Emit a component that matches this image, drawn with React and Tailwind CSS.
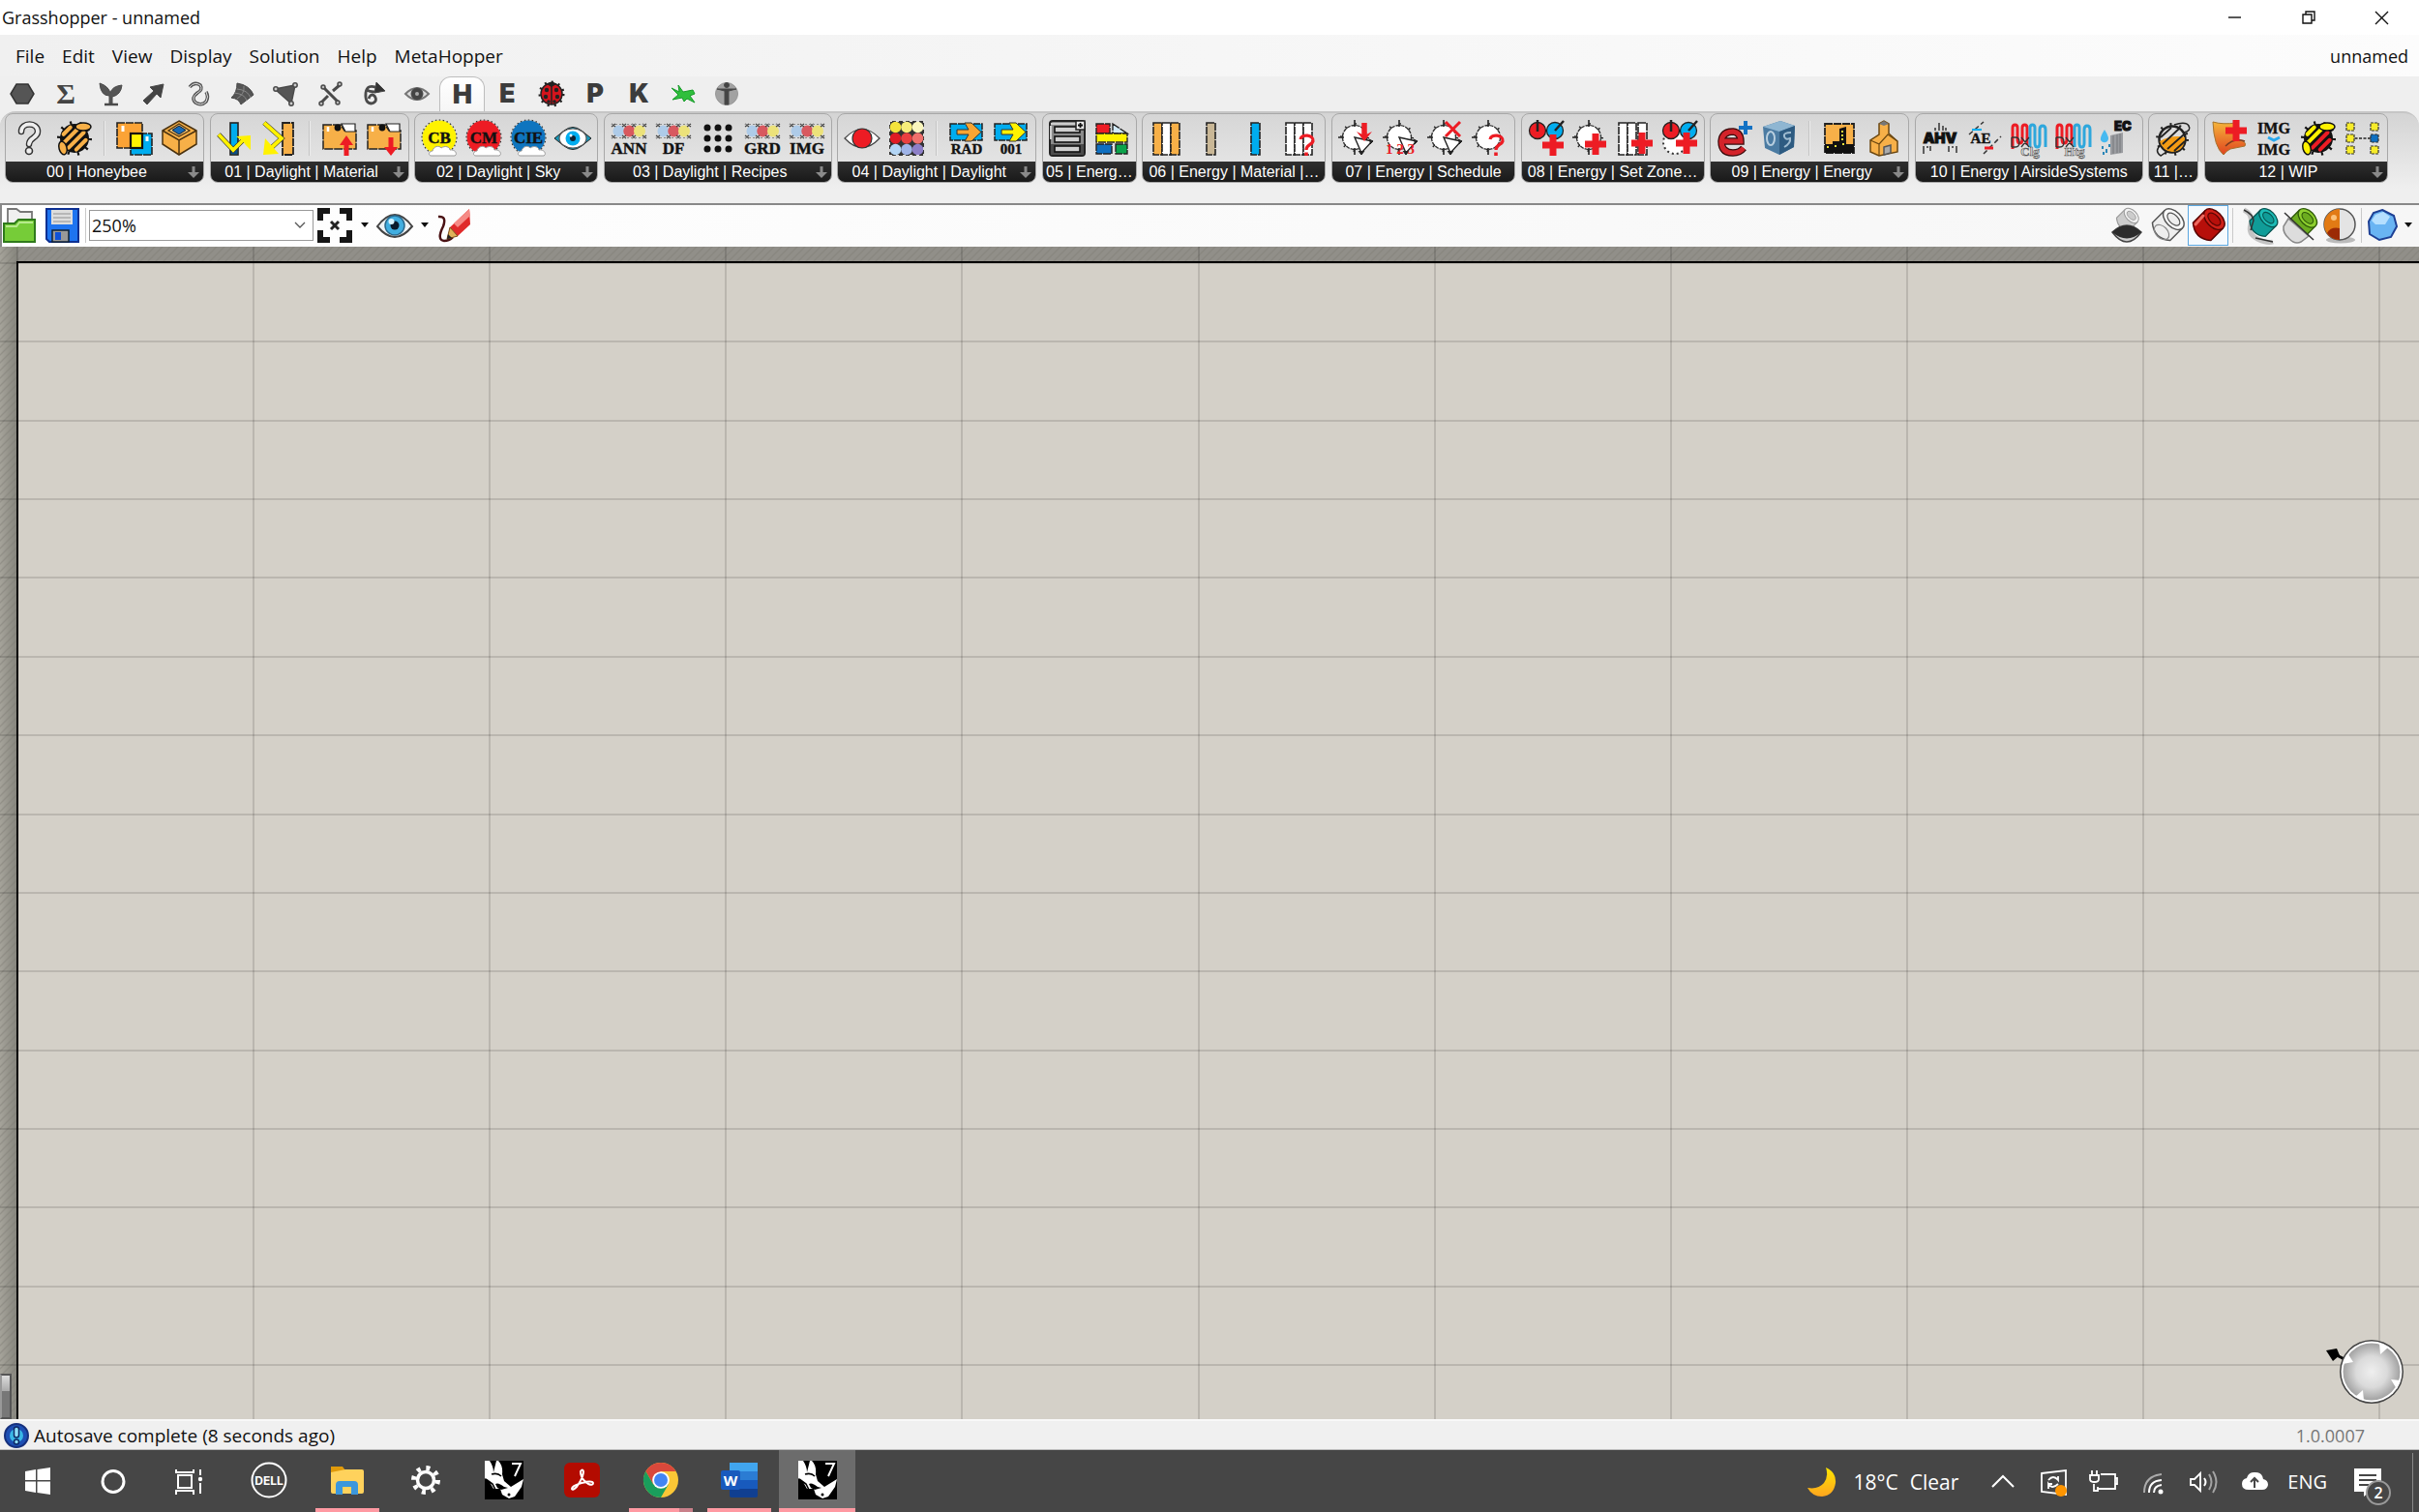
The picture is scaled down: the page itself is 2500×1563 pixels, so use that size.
import React, { useState } from "react";

const ORANGE = "#f7b048";
const RED = "#ed1c24";
const CYAN = "#00adef";
const YELLOW = "#fff200";

const Icon = ({ children }) => (
  <svg viewBox="0 0 38 38" className="size-[38px] shrink-0 overflow-visible" aria-hidden="true">
    {children}
  </svg>
);

/* ---------- shared drawing parts ---------- */

const SlabText = ({ x = 19, y, size = 17, children }) => (
  <text
    x={x}
    y={y}
    fontSize={size}
    fontWeight="700"
    textAnchor="middle"
    fontFamily="'Liberation Serif', serif"
    fill="#111"
    stroke="#111"
    strokeWidth=".4"
  >
    {children}
  </text>
);

const Plus = ({ x, y, r = 11, w = 7, color = RED }) => (
  <path d={`M${x - r} ${y}H${x + r}M${x} ${y - r}V${y + r}`} stroke={color} strokeWidth={w} />
);

const Bee = ({ body, wing, stripes }) => (
  <Icon>
    <circle cx="19" cy="19" r="15.5" fill="none" stroke="#111" strokeWidth="5" strokeDasharray="2 7.7" />
    <circle cx="19" cy="19" r="15" fill="#111" />
    <g transform="rotate(-45 19 19)" strokeWidth="4" strokeLinecap="round">
      <path d="M14 8H24" stroke={stripes[0]} />
      <path d="M9 14.500H29" stroke={stripes[0]} />
      <path d="M8 21.500H30" stroke={body} />
      <path d="M12 28.500H26" stroke={stripes[1]} />
    </g>
    <ellipse cx="28" cy="7" rx="8" ry="4" fill={wing} stroke="#111" strokeWidth="1.5" />
    <ellipse cx="7" cy="29" rx="4" ry="7" transform="rotate(-15 7 29)" fill={wing} stroke="#111" strokeWidth="1.5" />
  </Icon>
);

const Folder = ({ up }) => (
  <Icon>
    <path d="M2 5H20L24 11H36V30H2Z" fill={ORANGE} stroke="#222" strokeWidth="1.5" strokeDasharray="9 1" />
    <path d="M21 4H35V12H25Z" fill="#fff" stroke="#222" strokeWidth="1.2" />
    <circle cx="17" cy="8" r="3.4" fill="#111" />
    <path d="M7 7V12" stroke="#fff" strokeWidth="2.5" />
    {up ? (
      <path d="M26 16L33 26H28.5V37H23.5V26H19Z" fill={RED} />
    ) : (
      <path d="M26 37L33 28H28.5V18H23.5V28H19Z" fill={RED} />
    )}
  </Icon>
);

const Sky = ({ color, label }) => (
  <Icon>
    <circle cx="19" cy="18" r="17.5" fill={color} />
    <circle cx="19" cy="18" r="18" fill="none" stroke="#333" strokeWidth="1.2" strokeDasharray="1.5 2.5" />
    <SlabText y="24">{label}</SlabText>
    <path
      d="M11 37C7 37 8 32 12 32C13 27 19 26 21 29C25 26 30 28 30 31C36 30 38 36 35 37Z"
      fill="#fff"
      stroke="#999"
      strokeWidth="1"
    />
  </Icon>
);

const Film = () => (
  <g>
    <circle cx="8.5" cy="11.5" r="6" fill="#aecbe8" />
    <circle cx="19.3" cy="11.5" r="6" fill="#d8595f" />
    <circle cx="30" cy="11.5" r="6" fill="#ece27a" />
    <path
      d="M1 4l4 3M5 4l-4 3M12 4l4 3M16 4l-4 3M22 4l4 3M26 4l-4 3M33 4l4 3M37 4l-4 3M1 16l4 3M5 16l-4 3M12 16l4 3M16 16l-4 3M22 16l4 3M26 16l-4 3M33 16l4 3M37 16l-4 3"
      stroke="#444"
      strokeWidth="1.2"
    />
    <path d="M1 4.5H37M1 18.5H37" stroke="#888" strokeWidth="1" strokeDasharray="2 2" />
  </g>
);

const FilmLabel = ({ label }) => (
  <Icon>
    <Film />
    <SlabText y="35">{label}</SlabText>
  </Icon>
);

const ArrowLabel = ({ color, label }) => (
  <Icon>
    <rect x="2" y="4" width="33" height="17" fill={CYAN} stroke="#222" strokeWidth="1.5" strokeDasharray="7 1" />
    <path d="M9 10H21L17 3H24L34 12.5L24 22H17L21 15H9Z" fill={color} stroke="#333" strokeWidth="1" />
    <SlabText y="35" size={15}>{label}</SlabText>
  </Icon>
);

const Clock = ({ wedge = true }) => (
  <g>
    <circle cx="17" cy="18" r="12.5" fill="#fff" stroke="#333" strokeWidth="1.4" strokeDasharray="4 1" />
    <circle cx="17" cy="18" r="13.5" fill="none" stroke="#222" strokeWidth="3" strokeDasharray="1.3 9.3" />
    <path d="M17 0V7M0 18H6M17 29V36" stroke="#222" strokeWidth="1.6" />
    {wedge && <path d="M17 18L35 22L24 34Z" fill="#fff" stroke="#222" strokeWidth="1.4" />}
    {wedge && <path d="M32 20l4 2l-3 3M21 32l3 4l3-4" fill="#222" stroke="#222" />}
  </g>
);

const RedQuestion = () => (
  <g fill="none" stroke={RED} strokeWidth="3.2">
    <path d="M19 20C20 14 33 15 32 22C31 26 25 25 25 31" />
    <path d="M25 33.5V37" strokeWidth="3.6" />
  </g>
);

const Dials = () => (
  <g stroke="#222" strokeWidth="1.3">
    <circle cx="10" cy="11" r="8.5" fill={RED} />
    <circle cx="28" cy="11" r="8.5" fill={CYAN} />
    <path d="M10 0V12M28 11L37 1" strokeWidth="2.5" />
  </g>
);

const Coil = ({ label }) => (
  <Icon>
    <g fill="none" strokeWidth="3">
      <path d="M2 30V8Q2 5 4.5 5T7 8V20Q7 24 9.5 24T12 20V8Q12 5 14.5 5T17 8V26" stroke={RED} />
      <path d="M20 28V8Q20 5 22.5 5T25 8V24Q25 28 27.5 28T30 24V10Q30 6 33 6T36 10V28" stroke="#2ea7dc" />
    </g>
    <path d="M1 18V28M1 18H5Q9 18 9 23T5 28H1M11 18L19 28M19 18L11 28" fill="none" stroke="#333" strokeWidth="1.3" />
    <text x="20" y="37" fontSize="13" fontWeight="700" textAnchor="middle" fontFamily="'Liberation Serif', serif" fill="#ddd" stroke="#555" strokeWidth=".6">{label}</text>
  </Icon>
);

const Slab = ({ x, w, color }) => (
  <rect x={x} y="3" width={w} height="33" fill={color} stroke="#222" strokeWidth="1.6" strokeDasharray="8 1" />
);

/* ---------- ribbon groups ---------- */

const GROUPS = [
  {
    label: "00 | Honeybee",
    more: true,
    icons: [
      ["Help", <Icon>
        <g fill="none" strokeLinecap="round">
          <path d="M10 12C10 2 27 2 27 12C27 19 18 18 18 25" stroke="#333" strokeWidth="6.5" />
          <path d="M10 12C10 2 27 2 27 12C27 19 18 18 18 25" stroke="#eee" strokeWidth="3.8" />
        </g>
        <circle cx="18" cy="32" r="3.5" fill="#eee" stroke="#333" strokeWidth="1.6" />
      </Icon>],
      ["Honeybee", <Bee body={ORANGE} wing={ORANGE} stripes={[ORANGE, ORANGE]} />],
      null,
      ["Solve adjacencies", <Icon>
        <rect x="1" y="3" width="26" height="26" fill="#fba336" stroke="#222" strokeWidth="1.6" strokeDasharray="8 1" />
        <rect x="15" y="14" width="22" height="22" fill={CYAN} stroke="#222" strokeWidth="1.6" strokeDasharray="8 1" />
        <rect x="15" y="14" width="12" height="15" fill={YELLOW} stroke="#111" strokeWidth="2.2" />
        <path d="M7 6V12M32 17V22" stroke="#fff" strokeWidth="3" />
      </Icon>],
      ["Create zone", <Icon>
        <path d="M19 1L37 11V25L19 36L2 25V11Z" fill={ORANGE} stroke="#4a3210" strokeWidth="1.5" />
        <path d="M2 11L19 21L37 11M19 21V36" stroke="#4a3210" strokeWidth="1.5" fill="none" />
        <path d="M19 4L30 11L19 17L8 11Z" fill="#f9c574" stroke="#4a3210" strokeWidth="1.2" />
        <path d="M19 6L26 10.5L19 15L12 10.5Z" fill="#1568b4" stroke="#123" strokeWidth="1" />
      </Icon>],
    ],
  },
  {
    label: "01 | Daylight | Material",
    more: true,
    icons: [
      ["Glass material", <Icon>
        <rect x="14" y="3" width="8" height="33" fill={CYAN} stroke="#222" strokeWidth="1.6" />
        <rect x="15" y="29" width="6" height="6" fill="#0b4f8a" />
        <path d="M2 15L17 31L29 19" stroke="#333" strokeWidth="5" fill="none" />
        <path d="M2 15L17 31L28 20" stroke={YELLOW} strokeWidth="3.8" fill="none" />
        <path d="M20 17L35 16L35 31L30 26L27 22Z" fill={YELLOW} />
      </Icon>],
      ["Opaque material", <Icon>
        <rect x="22" y="3" width="11" height="33" fill={ORANGE} stroke="#222" strokeWidth="1.8" strokeDasharray="8 1" />
        <path d="M3 3L21 19L9 30" stroke="#333" strokeWidth="5" fill="none" />
        <path d="M3 3L21 19L9 30" stroke={YELLOW} strokeWidth="3.8" fill="none" />
        <path d="M4 19L18 35L2 36Z" fill={YELLOW} />
      </Icon>],
      null,
      ["Add to library", <Folder up />],
      ["Get from library", <Folder />],
    ],
  },
  {
    label: "02 | Daylight | Sky",
    more: true,
    icons: [
      ["Climate based sky", <Sky color={YELLOW} label="CB" />],
      ["Cumulative sky", <Sky color={RED} label="CM" />],
      ["CIE sky", <Sky color="#0f75bf" label="CIE" />],
      ["View sky", <Icon>
        <path d="M0 19L10 11Q19 4 28 11L38 19L28 27Q19 34 10 27Z" fill="#1597b8" stroke="#222" strokeWidth="1" />
        <ellipse cx="19" cy="19" rx="14" ry="10" fill="#fff" stroke="#555" strokeWidth="1.2" />
        <circle cx="19" cy="19" r="7.5" fill={CYAN} />
        <circle cx="19" cy="19" r="3" fill="#123" />
        <circle cx="17" cy="16" r="1.5" fill="#fff" />
      </Icon>],
    ],
  },
  {
    label: "03 | Daylight | Recipes",
    more: true,
    icons: [
      ["Annual recipe", <FilmLabel label="ANN" />],
      ["Daylight factor recipe", <FilmLabel label="DF" />],
      ["Test points", <Icon>
        <g fill="#111">
          {[8, 19, 30].map((y) => [8, 19, 30].map((x) => <circle key={`${x}-${y}`} cx={x} cy={y} r="3.5" />))}
        </g>
      </Icon>],
      ["Grid recipe", <FilmLabel label="GRD" />],
      ["Image recipe", <FilmLabel label="IMG" />],
    ],
  },
  {
    label: "04 | Daylight | Daylight",
    more: true,
    icons: [
      ["Run daylight", <Icon>
        <path d="M1 19Q19 0 37 19Q19 38 1 19Z" fill="#fff" stroke="#444" strokeWidth="1.2" />
        <circle cx="19" cy="19" r="10" fill={RED} stroke="#333" strokeWidth="1.2" />
      </Icon>],
      ["Read results", <Icon>
        <rect x="1" y="1" width="36" height="36" fill="#333" />
        {["#f3e33c", "#f7ed7a", "#faf6bd", "#e01b24", "#ea4040", "#f0706c", "#b3d5f5", "#9fb4e8", "#8d7fc7"].map((c, i) => (
          <circle key={c} cx={7.5 + (i % 3) * 11.5} cy={7.5 + Math.floor(i / 3) * 11.5} r="5.8" fill={c} />
        ))}
        <rect x="1" y="1" width="36" height="36" fill="none" stroke="#ddd" strokeWidth="2" strokeDasharray="3 4" />
      </Icon>],
      null,
      ["Export RAD", <ArrowLabel color="#f9a533" label="RAD" />],
      ["Export points", <ArrowLabel color={YELLOW} label="001" />],
    ],
  },
  {
    label: "05 | Energ…",
    icons: [
      ["Lookup program", <Icon>
        <rect x="1" y="1" width="36" height="36" rx="3" fill="#8a8a8a" stroke="#222" strokeWidth="2" />
        <rect x="2" y="25" width="34" height="11" fill="#4c4c4c" />
        <path d="M2 4H28M2 6V20" stroke="#ccc" strokeWidth="2" />
        {[7, 17, 27].map((y) => (
          <rect key={y} x="6" y={y} width="26" height="6" fill="#d0d0d0" stroke="#111" strokeWidth="1.6" />
        ))}
        <rect x="28" y="1" width="9" height="9" fill="#eee" stroke="#222" strokeWidth="1.5" />
        <path d="M30 5.5H35M32.5 3V8" stroke="#111" strokeWidth="1.8" />
      </Icon>],
      ["Split building mass", <Icon>
        <g stroke="#222" strokeWidth="1.4" strokeDasharray="8 1">
          <path d="M20 4L35 14H20Z" fill="#cfe9f7" />
          <rect x="3" y="4" width="14" height="10" fill={RED} />
          <rect x="3" y="14" width="32" height="9" fill={YELLOW} />
          <rect x="3" y="25" width="16" height="10" fill="#0f6fc0" />
          <rect x="23" y="25" width="12" height="10" fill="#0ca34b" />
        </g>
      </Icon>],
    ],
  },
  {
    label: "06 | Energy | Material |…",
    icons: [
      ["Wall construction", <Icon><Slab x={5} w={9} color={ORANGE} /><Slab x={14} w={9} color="#fff" /><Slab x={23} w={9} color={ORANGE} /></Icon>],
      ["Opaque layer", <Icon><Slab x={14} w={9} color="#c9b796" /></Icon>],
      ["Glass layer", <Icon><Slab x={14} w={9} color={CYAN} /></Icon>],
      ["Search construction", <Icon><Slab x={4} w={9} color="#fff" /><Slab x={13} w={9} color="#fff" /><Slab x={22} w={9} color="#fff" /><RedQuestion /></Icon>],
    ],
  },
  {
    label: "07 | Energy | Schedule",
    icons: [
      ["Import schedule", <Icon><Clock /><path d="M27 3V16" stroke={RED} strokeWidth="5.5" /><path d="M19 12L27 22L35 12L27 16Z" fill={RED} /></Icon>],
      ["Schedule values", <Icon>
        <Clock />
        <text x="18" y="35" fontSize="15" fontWeight="700" textAnchor="middle" fontFamily="'Liberation Serif', serif" fill={RED}>1 2 3</text>
      </Icon>],
      ["Remove schedule", <Icon><Clock /><path d="M19 2L34 17M34 2L19 17" stroke={RED} strokeWidth="3" /></Icon>],
      ["Search schedule", <Icon><Clock wedge={false} /><RedQuestion /></Icon>],
    ],
  },
  {
    label: "08 | Energy | Set Zone…",
    icons: [
      ["Set thresholds", <Icon><Dials /><Plus x={26} y={26} /></Icon>],
      ["Set schedules", <Icon><Clock wedge={false} /><Plus x={24} y={25} /></Icon>],
      ["Set constructions", <Icon><Slab x={2} w={9} color="#fff" /><Slab x={11} w={9} color="#fff" /><Slab x={22} w={9} color="#fff" /><Plus x={26} y={24} /></Icon>],
      ["Set loads", <Icon><circle cx="14" cy="23" r="12" fill="#fff" stroke="#333" strokeWidth="2" strokeDasharray="2 3" /><Dials /><Plus x={26} y={24} /></Icon>],
    ],
  },
  {
    label: "09 | Energy | Energy",
    more: true,
    icons: [
      ["Run EnergyPlus", <Icon>
        <path d="M5 22H25Q25 13 17 12Q6 12 5 22Q5 34 17 34Q24 34 28 29" fill="none" stroke="#3a0b0c" strokeWidth="7.5" />
        <path d="M5 22H25Q25 13 17 12Q6 12 5 22Q5 34 17 34Q24 34 28 29" fill="none" stroke="#d3232a" strokeWidth="5" />
        <Plus x={30} y={8} r={7} w={4} color="#1272c4" />
      </Icon>],
      ["Export to OpenStudio", <Icon>
        <path d="M2 7L20 1L35 6L34 28L19 36L4 29Z" fill="#4b7ba2" />
        <path d="M2 7L20 1L35 6L19 12Z" fill="#8fb6d2" />
        <path d="M19 12L35 6L34 28L19 36Z" fill="#2e5b81" />
        <ellipse cx="10" cy="19" rx="4" ry="7" fill="none" stroke="#b9cfdf" strokeWidth="2" />
        <path d="M31 13Q23 13 24 17T30 19Q31 24 24 28" fill="none" stroke="#9fbbd0" strokeWidth="2" />
      </Icon>],
      null,
      ["Surface parameters", <Icon>
        <rect x="4" y="4" width="30" height="30" fill={ORANGE} stroke="#222" strokeWidth="1.8" strokeDasharray="8 1" />
        <path d="M4 25H12V22H19V9L26 7V25H34V34H4Z" fill="#111" />
        <path d="M22 11V22M7 27V31M15 26V28M22 25L24 25" stroke="#e6e03a" strokeWidth="2" strokeDasharray="2 2" />
      </Icon>],
      ["Generator system", <Icon>
        <path d="M14 4L19 1L24 4V14L33 22V33L14 37L5 33V21L14 15Z" fill={ORANGE} stroke="#6b4710" strokeWidth="1.5" />
        <path d="M5 21L14 25V37M14 25L23 15L33 22" fill="none" stroke="#6b4710" strokeWidth="1.2" />
        <path d="M19 28L26 26V34L19 36Z" fill="#aaa" stroke="#555" strokeWidth="1.5" />
        <path d="M14 4L19 6L24 4L19 1Z" fill="#777" />
      </Icon>],
    ],
  },
  {
    label: "10 | Energy | AirsideSystems",
    icons: [
      ["Air handling unit", <Icon>
        <text x="19" y="24" fontSize="15" fontWeight="900" textAnchor="middle" fontFamily="Inter, sans-serif" fill="#111" stroke="#111">AHV</text>
        <path d="M14 8V11M18 3V11M22 6V11M25 8V11M2 27V35M6 27V29M9 27V32M28 27V33M32 27V29M36 27V34" stroke="#333" strokeWidth="1.5" />
      </Icon>],
      ["Airside economizer", <Icon>
        <SlabText x={15} y="24" size={15}>AE</SlabText>
        <path d="M3 15L18 2M18 35L36 17" stroke="#333" strokeWidth="1.5" strokeDasharray="5 3" />
        <path d="M6 10H16" stroke={CYAN} strokeWidth="2" />
        <path d="M19 29H28" stroke={RED} strokeWidth="3" />
      </Icon>],
      ["DX cooling coil", <Coil label="Clg" />],
      ["DX heating coil", <Coil label="Htg" />],
      ["Evaporative cooler", <Icon>
        <text x="15" y="11" fontSize="13" fontWeight="900" fontFamily="Inter, sans-serif" fill="#111" stroke="#111">EC</text>
        <path d="M5 10Q11 19 8 22Q4 25 1 21Q0 18 5 10Z" fill="#47b9f0" />
        <path d="M3 27v3M7 30v4M10 25v3M4 33v3" stroke="#2a86b8" strokeWidth="2" />
        <path d="M11 16L24 13V34L11 36Z" fill="#9a9ca0" />
        <path d="M14 16V35M18 15V34M21 14V34" stroke="#77797d" strokeWidth="1" />
      </Icon>],
    ],
  },
  {
    label: "11 |…",
    icons: [
      ["Honey jar", <Icon>
        <circle cx="18" cy="20" r="15.5" fill="none" stroke="#222" strokeWidth="3" strokeDasharray="2 8" />
        <circle cx="18" cy="20" r="13.5" fill="#ddd" stroke="#222" strokeWidth="2.5" />
        <path d="M5 22Q18 15 31 18Q31 32 18 33Q8 32 5 22Z" fill="#f49c14" />
        <path d="M8 25L25 9M13 30L30 15M20 32L31 22M6 18L17 8" stroke="#222" strokeWidth="1.8" />
        <path d="M20 5Q32 1 35 6T30 13M6 26Q-1 32 6 37L12 33" fill="none" stroke="#222" strokeWidth="1.5" />
      </Icon>],
    ],
  },
  {
    label: "12 | WIP",
    more: true,
    icons: [
      ["WIP add", <Icon>
        <defs>
          <linearGradient id="scroll" x1="0" y1="0" x2="0" y2="1">
            <stop offset="0" stopColor="#f5b63a" />
            <stop offset="1" stopColor="#e0431f" />
          </linearGradient>
        </defs>
        <path d="M2 2Q12 5 26 3V20Q38 22 35 27L20 30Q16 32 13 36Q3 28 2 2Z" fill="url(#scroll)" stroke="#a5742e" strokeWidth="1" />
        <path d="M15 27Q24 18 35 22" stroke="#7c3a20" strokeWidth="1.5" fill="none" />
        <Plus x={26} y={11} />
      </Icon>],
      ["Image compare", <Icon>
        <SlabText y="14" size={16}>IMG</SlabText>
        <path d="M13 18L19 21L25 18" stroke="#29a9ee" strokeWidth="3" fill="none" />
        <SlabText y="36" size={16}>IMG</SlabText>
      </Icon>],
      ["WIP bee", <Bee body={RED} wing={YELLOW} stripes={[YELLOW, RED]} />],
      ["Connect systems", <Icon>
        <path d="M6 19H32" stroke="#222" strokeWidth="1.5" strokeDasharray="3 1.5" />
        {[7, 19, 31].map((y) => (
          <g key={y} stroke="#333" strokeWidth="1.2" strokeDasharray="3 1">
            <rect x="2" y={y - 4} width="8" height="8" fill="#f7ec2a" />
            <rect x="27" y={y - 4} width="8" height="8" fill={y === 19 ? "#0f6fc0" : "#f7ec2a"} />
          </g>
        ))}
      </Icon>],
    ],
  },
];

/* ---------- component tabs ---------- */

const TabIcon = ({ children }) => (
  <svg viewBox="0 0 32 32" className="size-8" fill="#555" stroke="#4a4a4a" strokeWidth="1" aria-hidden="true">
    {children}
  </svg>
);

const Letter = ({ children }) => <span className="font-['Inter',sans-serif] text-[27px] leading-8 font-black text-[#3c3c3c]">{children}</span>;

const TABS = [
  ["Params", <TabIcon><path d="M10 6H22L28 16L22 26H10L4 16Z" stroke="#333" strokeWidth="1.5" /></TabIcon>],
  ["Maths", <span className="font-['Liberation_Serif',serif] text-3xl leading-8 font-bold text-[#444]">Σ</span>],
  ["Sets", <TabIcon>
    <path d="M15 26V18Q6 18 5 5Q14 8 16 15Q18 8 28 7Q27 17 18 19V26Z" />
    <path d="M10 27H24" strokeWidth="2.5" />
  </TabIcon>],
  ["Vector", <TabIcon><path d="M26 6L23 20L19 16L9 27L5 23L16 13L12 9Z" fill="#444" /></TabIcon>],
  ["Curve", <TabIcon>
    <path d="M8 9Q13 3 19 7Q22 12 16 15Q9 20 14 25Q20 29 25 24Q28 19 25 14" fill="none" strokeWidth="3.5" stroke="#555" />
    <path d="M8 9Q13 3 19 7Q22 12 16 15Q9 20 14 25Q20 29 25 24Q28 19 25 14" fill="none" strokeWidth="1" stroke="#ddd" />
  </TabIcon>],
  ["Surface", <TabIcon>
    <path d="M11 5Q24 7 28 17L15 27Q13 21 5 20Q11 15 11 5Z" />
    <path d="M8 15Q19 16 21 23M18 8Q19 16 11 21M11 11Q22 12 25 20" fill="none" stroke="#888" />
  </TabIcon>],
  ["Mesh", <TabIcon>
    <path d="M5 11L26 7L22 26Z" strokeWidth="1.5" />
    <g fill="#ccc" strokeWidth="1.5"><circle cx="6" cy="11" r="2.2" /><circle cx="26" cy="7" r="2.2" /><circle cx="22" cy="26" r="2.2" /></g>
  </TabIcon>],
  ["Intersect", <TabIcon>
    <path d="M7 25L14 18M19 13L26 7M9 9L24 24" strokeWidth="3" />
    <g fill="#bbb" strokeWidth="1.5"><circle cx="7" cy="26" r="2" /><circle cx="26" cy="6" r="2" /><circle cx="9" cy="9" r="2" /><circle cx="24" cy="25" r="2" /></g>
  </TabIcon>],
  ["Transform", <TabIcon>
    <path d="M21 10Q9 5 8 15Q7 26 14 26Q21 24 17 18Q13 15 11 21M9 12Q14 15 22 13" fill="none" strokeWidth="2.8" />
    <path d="M19 4L28 13L17 15Z" fill="#333" />
  </TabIcon>],
  ["Display", <TabIcon>
    <path d="M4 16Q16 4 28 16Q16 28 4 16Z" fill="#ddd" strokeWidth="2" stroke="#777" />
    <circle cx="16" cy="16" r="6" fill="#444" /><circle cx="16" cy="16" r="2" fill="#aaa" stroke="none" />
  </TabIcon>],
  ["Honeybee", <Letter>H</Letter>],
  ["Extra", <Letter>E</Letter>],
  ["Ladybug", <TabIcon>
    <circle cx="16" cy="16" r="12" fill="none" stroke="#222" strokeWidth="3" strokeDasharray="2 5" />
    <circle cx="16" cy="16" r="11" fill="#d4141c" stroke="#222" strokeWidth="1.5" />
    <path d="M16 6V27" stroke="#222" strokeWidth="1.5" />
    <g fill="#222" stroke="none"><circle cx="11" cy="12" r="2.2" /><circle cx="21" cy="12" r="2.2" /><circle cx="10" cy="19" r="2.2" /><circle cx="22" cy="19" r="2.2" /><circle cx="13" cy="24" r="1.8" /><circle cx="19" cy="24" r="1.8" /><path d="M11 6Q16 1 21 6L16 9Z" /></g>
  </TabIcon>],
  ["Pufferfish", <Letter>P</Letter>],
  ["Kangaroo2", <Letter>K</Letter>],
  ["LunchBox", <TabIcon>
    <path d="M4 10L12 14L11 7L16 14L26 12L28 16L23 18L28 25L20 21L17 24L15 20L5 22L11 17Z" fill="#2fbf3c" stroke="#189b2a" />
  </TabIcon>],
  ["Human", <TabIcon>
    <circle cx="16" cy="16" r="11.5" fill="#a2a2a2" stroke="#999" />
    <path d="M6 11H26L18 13V27H14V13Z" fill="#444" /><circle cx="16" cy="7" r="2.5" fill="#444" />
  </TabIcon>],
];

/* ---------- canvas toolbar icons ---------- */

const Cylinder = ({ body, top, line = "#333" }) => (
  <g transform="rotate(45 19 19)">
    <path d="M6 10V28Q19 39 32 28V10" fill={body} stroke={line} strokeWidth="1.5" />
    <ellipse cx="19" cy="10" rx="13" ry="8" fill={top} stroke={line} strokeWidth="1.5" />
    <ellipse cx="19" cy="10" rx="8" ry="4.5" fill={body} stroke={line} strokeWidth="1.2" />
  </g>
);

const Caret = () => (
  <svg viewBox="0 0 8 6" className="h-[6px] w-2" aria-hidden="true">
    <path d="M0 0H8L4 5Z" fill="#111" />
  </svg>
);

const PREVIEW_MODES = [
  ["No preview", <Icon>
    <g transform="translate(6 0) scale(.7)"><Cylinder body="#ccc" top="#f2f2f2" line="#999" /></g>
    <path d="M4 26Q19 12 34 26Q19 46 4 26Z" fill="#ccc" stroke="#444" strokeWidth="1.5" />
    <path d="M4 26Q19 12 34 26Q19 39 4 26Z" fill="#2b2b2b" />
  </Icon>],
  ["Wireframe preview", <Icon>
    <Cylinder body="#eee" top="#fafafa" line="#555" />
    <ellipse cx="13" cy="26" rx="9" ry="6" transform="rotate(45 13 26)" fill="none" stroke="#888" strokeWidth="1.2" />
  </Icon>],
  ["Shaded preview", <Icon>
    <Cylinder body="#b70f0a" top="#cf2018" line="#5a0503" />
    <path d="M14 9L6 18" stroke="#ec6a60" strokeWidth="3" strokeLinecap="round" />
  </Icon>],
];

const DISPLAY_OPTIONS = [
  ["Document preview settings", <Icon>
    <path d="M2 3Q12 8 9 18T16 33T32 36" stroke="#777" strokeWidth="5" opacity=".4" fill="none" />
    <g transform="translate(5 0) scale(.88)"><Cylinder body="#109c98" top="#1cbcb6" line="#075451" /></g>
    <path d="M2 3Q12 8 12 14L9 24M14 32L32 36" stroke="#333" strokeWidth="1.5" fill="none" />
  </Icon>],
  ["Only draw preview geometry for selected objects", <Icon>
    <g transform="translate(4 0) scale(.9)"><Cylinder body="#6cac1f" top="#8ed02f" line="#2f5a09" /></g>
    <path d="M7 12L2 20Q1 27 8 33Q14 39 20 36L28 30Z" fill="#ddd" stroke="#888" strokeWidth="1.5" />
    <path d="M3 6L33 34" stroke="#333" strokeWidth="1.5" />
  </Icon>],
  ["Preview mesh quality", <Icon>
    <ellipse cx="20" cy="34" rx="15" ry="3.5" fill="#bbb" />
    <circle cx="19" cy="18" r="16" fill="#e4e4e4" stroke="#555" strokeWidth="1.5" />
    <path d="M19 2A16 16 0 0 0 19 34Z" fill="#e27a14" />
    <path d="M6 27A16 16 0 0 0 19 34V22Q10 20 6 27Z" fill="#9c2a05" />
    <circle cx="13" cy="11" r="3" fill="#fbc27a" />
  </Icon>],
];

const FitIcon = () => (
  <Icon>
    <g fill="none" stroke="#161616" strokeWidth="6">
      <path d="M4 14V4H14M24 4H34V14M34 24V34H24M14 34H4V24" />
    </g>
    <path d="M15 15L23 23M23 15L15 23" stroke="#222" strokeWidth="3" />
  </Icon>
);

const EyeIcon = () => (
  <Icon>
    <path d="M1 20Q19 -4 37 20Q19 42 1 20Z" fill="#eef3f5" stroke="#444" strokeWidth="2" />
    <circle cx="19" cy="19" r="10" fill="#41aee0" stroke="#2a6a8e" strokeWidth="1.5" />
    <circle cx="19" cy="19" r="4.5" fill="#0a1a2c" />
    <circle cx="15.5" cy="15" r="3" fill="#d8f3ff" />
  </Icon>
);

const SketchIcon = () => (
  <Icon>
    <path d="M2 10Q11 9 7 20Q0 34 8 35Q13 35 17 31" fill="none" stroke="#4a1214" strokeWidth="2.5" />
    <path d="M34 2L14 21L22 30L35 18Z" fill="#e02a2a" />
    <path d="M34 2L18 17L22 21L35 9Z" fill="#f58a85" />
    <path d="M14 21L11 33L22 30Z" fill="#e0b25a" stroke="#7a4a17" strokeWidth="1" />
    <path d="M11 33l1-5l4 4Z" fill="#222" />
  </Icon>
);

/* ---------- taskbar ---------- */

const Rhino = () => (
  <svg viewBox="0 0 40 40" className="size-10" aria-hidden="true">
    <rect width="40" height="40" fill="#000" />
    <path d="M0 0H5Q9 6 9 12L12 0H14Q19 5 18 14L20 21L27 27L40 19L38 27L31 37L25 39L18 35L16 29L9 29L5 22L0 18Z" fill="#fff" />
    <path d="M7 14Q13 12 17 16M1 19L8 24L11 30" stroke="#000" strokeWidth="1.6" fill="none" />
    <path d="M11 24Q14 22 20 27L24 28L17 30L13 28Z" fill="#000" />
    <circle cx="25" cy="35" r="1.5" fill="#000" />
    <path d="M28 3H37L31 16" stroke="#fff" strokeWidth="2" fill="none" />
  </svg>
);

const TaskSvg = ({ children }) => (
  <svg viewBox="0 0 40 40" className="size-10" fill="none" stroke="#fff" strokeWidth="2" aria-hidden="true">
    {children}
  </svg>
);

const SYSTEM_BUTTONS = [
  ["Start", <TaskSvg>
    <path d="M7 10L18 8V19H7ZM19.5 8L33 6V19H19.5ZM7 20.5H18V32L7 30ZM19.5 20.5H33V34L19.5 32Z" fill="#fff" stroke="none" />
  </TaskSvg>],
  ["Cortana", <TaskSvg><circle cx="20" cy="20.5" r="11" strokeWidth="3" /></TaskSvg>],
  ["Task view", <TaskSvg>
    <rect x="9" y="14" width="14" height="13" />
    <path d="M7 8V11H25V8M7 34V30H25V34M32 8V14M32 22V33" />
    <circle cx="32" cy="18" r="2.2" fill="#fff" stroke="none" />
  </TaskSvg>],
];

const APPS = [
  { name: "Dell", state: "", icon: <TaskSvg>
    <circle cx="20" cy="20" r="17.5" />
    <text x="20" y="25" fontSize="12" fontWeight="700" textAnchor="middle" fontFamily="Inter, sans-serif" fill="#fff" stroke="none">DELL</text>
  </TaskSvg> },
  { name: "File Explorer", state: "open", icon: <TaskSvg>
    <path d="M3 6H15L18 10V16H3Z" fill="#e09a0a" stroke="none" />
    <path d="M3 12L18 9H35Q37 9 37 11V32Q37 34 35 34H5Q3 34 3 32Z" fill="#ffd25c" stroke="none" />
    <path d="M8 35V25Q8 21 12 21H27Q31 21 31 25V35H24V27H15V35Z" fill="#3c97dc" stroke="none" />
  </TaskSvg> },
  { name: "Settings", state: "", icon: <TaskSvg>
    <circle cx="20" cy="20" r="8.5" strokeWidth="3.5" />
    <circle cx="20" cy="20" r="12.5" strokeWidth="5" strokeDasharray="4 5.817" />
  </TaskSvg> },
  { name: "Rhino 7", state: "", icon: <Rhino /> },
  { name: "Adobe Acrobat", state: "", icon: <TaskSvg>
    <rect x="1" y="2" width="37" height="36" rx="6" fill="#b30b00" stroke="none" />
    <path d="M18 11Q20 8 21 11Q21 17 14 27Q10 31 9 29Q9 26 19 23Q30 20 31 23Q31 26 26 24Q18 19 18 11Z" />
  </TaskSvg> },
  { name: "Google Chrome", state: "split", icon: <TaskSvg>
    <g stroke="none">
      <circle cx="20" cy="20" r="18" fill="#fbc736" />
      <path d="M4.4 11A18 18 0 0 1 35.6 11H20L12.2 24.5Z" fill="#d9483b" />
      <path d="M4.4 11A18 18 0 0 0 20 38L27.8 24.5L12.2 24.5Z" fill="#1a9e5c" />
      <circle cx="20" cy="20" r="8.8" fill="#fff" />
      <circle cx="20" cy="20" r="7" fill="#4285f4" />
    </g>
  </TaskSvg> },
  { name: "Word", state: "open", icon: <TaskSvg>
    <g stroke="none">
      <rect x="10" y="2" width="29" height="36" rx="2" fill="#103f91" />
      <rect x="10" y="2" width="29" height="10" fill="#41a5ee" />
      <rect x="10" y="11" width="29" height="9" fill="#2b7cd3" />
      <rect x="10" y="20" width="29" height="9" fill="#185abd" />
      <rect x="1" y="10" width="20" height="20" rx="2" fill="#185abd" />
      <text x="11" y="26" fontSize="15" fontWeight="700" textAnchor="middle" fontFamily="'Open Sans', sans-serif" fill="#fff">W</text>
    </g>
  </TaskSvg> },
  { name: "Grasshopper", state: "active", icon: <Rhino /> },
];

const TRAY = [
  ["Show hidden icons", <path d="M9 25L20 14L31 25" />],
  ["Windows Update", <g>
    <path d="M8 11L33 8V33L8 30Z" strokeWidth="1.8" />
    <path d="M15 18Q20 12 25 18V14M25 22Q19 28 15 22V27M15 22H19" strokeWidth="1.8" />
    <circle cx="28" cy="29" r="6" fill="#ff9500" stroke="none" />
  </g>],
  ["Battery", <g>
    <path d="M17 12H32V27H14M32 16H34V22H32M10 22V29H14V25" strokeWidth="1.8" />
    <path d="M8 8V13M13 8V13M6 13H15V17Q15 20 10.5 20T6 17Z" strokeWidth="1.8" />
  </g>],
  ["Network", <g>
    <circle cx="27" cy="30" r="2.5" fill="#fff" stroke="none" />
    <path d="M20 31Q20 24 28 23" /><path d="M15 31Q15 19 28 18" />
    <path d="M10 31Q10 14 28 12" opacity=".55" />
  </g>],
  ["Volume", <g>
    <path d="M6 17H10L16 11V29L10 23H6Z" strokeWidth="1.8" />
    <path d="M20 16Q23 20 20 24" /><path d="M25 12Q30 20 25 28M29 9Q36 20 29 31" opacity=".5" />
  </g>],
  ["Cloud upload", <g>
    <path d="M14 28Q7 28 7 22Q7 17 12 16Q14 9 21 10Q28 10 29 17Q34 18 34 23Q33 28 28 28Z" fill="#fff" stroke="none" />
    <path d="M20 26V17M16 20L20 16L24 20" stroke="#464646" />
  </g>],
];

/* ---------- canvas grid ---------- */

const GRID_X = 244.1;
const GRID_Y = 81.36;

const CanvasGrid = () => (
  <svg className="absolute inset-0 size-full" shapeRendering="crispEdges" aria-hidden="true">
    <defs>
      <pattern id="hatch" width="8" height="8" patternUnits="userSpaceOnUse">
        <path d="M-2 2L2 -2M0 8L8 0M6 10L10 6" stroke="#7c7a72" strokeWidth="1.5" opacity=".4" shapeRendering="auto" />
      </pattern>
      <linearGradient id="edge" x1="0" y1="0" x2="1" y2="0">
        <stop offset="0" stopColor="#a5a39a" />
        <stop offset="1" stopColor="#85847c" />
      </linearGradient>
    </defs>
    <rect width="100%" height="16" fill="#918f89" />
    <rect width="18" height="100%" fill="url(#edge)" />
    <rect width="100%" height="16" fill="url(#hatch)" />
    <rect y="16" width="18" height="100%" fill="url(#hatch)" />
    <path d="M18 3000V16H5000" fill="none" stroke="#000" strokeWidth="2" />
    {Array.from({ length: 18 }, (_, i) => (
      <rect key={`v${i}`} x={Math.round(17 + i * GRID_X)} width="2" height="100%" fill="#000" opacity=".12" />
    ))}
    {Array.from({ length: 24 }, (_, i) => (
      <rect key={`h${i}`} y={Math.round(16 + i * GRID_Y)} width="100%" height="2" fill="#000" opacity=".12" />
    ))}
  </svg>
);

const Compass = () => (
  <svg viewBox="0 0 80 72" className="absolute right-3 bottom-[13px] h-[72px] w-20 overflow-visible" aria-hidden="true">
    <defs>
      <radialGradient id="dial">
        <stop offset="0" stopColor="#efefef" />
        <stop offset=".55" stopColor="#dadada" />
        <stop offset="1" stopColor="#a2a2a2" />
      </radialGradient>
    </defs>
    <path d="M-4 14L7 12L10 19L3 25Z" fill="#000" />
    <path d="M7 19L15 23" stroke="#000" strokeWidth="3" />
    <circle cx="43" cy="36" r="33" fill="#444" />
    <circle cx="43" cy="36" r="31.5" fill="#fff" />
    <circle cx="43" cy="36" r="29.5" fill="url(#dial)" />
    <path d="M51 6L60 11L52 18ZM73 45L63 44L69 54ZM35 66L26 62L34 55ZM13 28L19 18L24 26Z" fill="#fff" />
  </svg>
);

const MENUS = ["File", "Edit", "View", "Display", "Solution", "Help", "MetaHopper"];

const RibbonGroup = ({ group }) => (
  <section className="shrink-0 overflow-hidden rounded-lg border border-[#a8a8a8] bg-linear-to-b from-[#d6d6d6] to-[#e9e9e9]">
    <div className="flex h-[49px] items-center px-[2px]">
      {group.icons.map((item, i) =>
        item === null ? (
          <div key={i} className="mx-[7px] h-9 w-[2px] border-l border-[#c4c4c4] bg-[#ececec]" />
        ) : (
          <button key={i} type="button" aria-label={item[0]} className="flex w-[46px] justify-center">
            {item[1]}
          </button>
        )
      )}
    </div>
    <div className="flex h-[22px] w-0 min-w-full items-center bg-linear-to-b from-[#303030] to-[#181818] text-white">
      <span className="flex-1 text-center font-['Liberation_Sans',Arial,sans-serif] text-base leading-5 whitespace-nowrap">
        {group.label}
      </span>
      {group.more && (
        <button type="button" aria-label="More components" className="w-4">
          <svg viewBox="0 0 12 12" className="size-3">
            <path d="M6 0V10" stroke="#8a8a8a" strokeWidth="3" />
            <path d="M0 6H12L6 12Z" fill="#8a8a8a" />
          </svg>
        </button>
      )}
    </div>
  </section>
);

const App = () => {
  const [activeTab, setActiveTab] = useState("Honeybee");
  const [preview, setPreview] = useState("Shaded preview");

  return (
    <div className="flex h-screen flex-col overflow-hidden bg-[#efefef] font-['Open_Sans','Segoe_UI',sans-serif] text-[18px] leading-6 text-[#111]">
      <header className="flex h-9 shrink-0 items-center justify-between bg-white pl-[2px]">
        <h1>Grasshopper - unnamed</h1>
        <div className="flex">
          {[
            ["Minimize", <path d="M3 10H16" />],
            ["Restore", <path d="M4 7H13V16H4ZM7 7V4H16V13H13" />],
            ["Close", <path d="M3 4L16 17M16 4L3 17" />],
          ].map(([name, shape]) => (
            <button key={name} type="button" aria-label={name} className="flex w-[76px] justify-center">
              <svg viewBox="0 0 20 20" className="size-5" fill="none" stroke="#111" strokeWidth="1.4">{shape}</svg>
            </button>
          ))}
        </div>
      </header>

      <nav className="flex h-[43px] shrink-0 items-center bg-linear-to-r from-[#f0f0f0] to-[#fcfcfc] pt-px pr-[11px] pl-4">
        <div className="flex gap-[18px] text-[19px]">
          {MENUS.map((m) => (
            <button key={m} type="button">{m}</button>
          ))}
        </div>
        <span className="ml-auto">unnamed</span>
      </nav>

      <div className="flex h-9 w-[774px] shrink-0" role="tablist">
        {TABS.map(([name, icon]) => {
          const active = name === activeTab;
          return (
            <button
              key={name}
              type="button"
              role="tab"
              aria-label={name}
              aria-selected={active}
              onClick={() => setActiveTab(name)}
              className={`flex flex-1 items-center justify-center ${
                active ? "rounded-t-xl border border-b-0 border-[#bdbdbd] bg-linear-to-b from-white to-[#f6f6f6]" : ""
              }`}
            >
              {icon}
            </button>
          );
        })}
      </div>

      <div className="h-[95px] shrink-0">
        <div className="flex h-20 justify-between rounded-t-2xl border-t-2 border-[#c6c6c6] bg-linear-to-b from-[#d4d4d4] to-[#efefef] pr-8 pb-[6px] pl-[5px]">
          {GROUPS.map((g) => (
            <RibbonGroup key={g.label} group={g} />
          ))}
        </div>
      </div>

      <div className="flex h-[45px] shrink-0 items-center border-t-2 border-l-2 border-[#888] bg-linear-to-r from-white to-[#f6f6f6] pb-[2px]">
        <button type="button" aria-label="Open file">
          <Icon>
            <path d="M6 2H15L19 5H31V24H6Z" fill="#f0f0f0" stroke="#777" strokeWidth="1.8" />
            <path d="M2 17H13L17 13H34V36H2Z" fill="#76cc38" stroke="#2f7a1b" strokeWidth="2" />
            <path d="M4 20H15L18 16H32" stroke="#b6ea8c" strokeWidth="2" fill="none" />
          </Icon>
        </button>
        <button type="button" aria-label="Save file" className="ml-[5px]">
          <Icon>
            <path d="M3 2H36V36H6L3 33Z" fill="#1e74f0" stroke="#0c2f92" strokeWidth="2" />
            <rect x="8" y="3" width="22" height="15" fill="#ddd" />
            <path d="M10 7H28M10 11H28M10 15H28" stroke="#aaa" strokeWidth="1.5" />
            <rect x="9" y="24" width="17" height="12" fill="#999" stroke="#123" strokeWidth="1.5" />
            <rect x="12" y="26" width="6" height="8" fill="#0f52d8" />
          </Icon>
        </button>
        <div className="mr-[3px] ml-[5px] h-9 w-px bg-[#c9c9c9]" />
        <div className="relative">
          <select
            aria-label="Zoom"
            defaultValue="250%"
            className="h-8 w-[232px] appearance-none border border-[#9a9a9a] bg-white pl-[2px] text-[18px]"
          >
            <option>100%</option>
            <option>150%</option>
            <option>200%</option>
            <option>250%</option>
          </select>
          <svg viewBox="0 0 12 8" className="pointer-events-none absolute top-3 right-2 h-2 w-3" aria-hidden="true">
            <path d="M1 1L6 6L11 1" fill="none" stroke="#555" strokeWidth="1.3" />
          </svg>
        </div>
        <button type="button" aria-label="Zoom extents" className="ml-[3px] flex items-center gap-2"><FitIcon /><Caret /></button>
        <button type="button" aria-label="Named views" className="ml-2 flex items-center gap-2"><EyeIcon /><Caret /></button>
        <button type="button" aria-label="Sketch" className="ml-2"><SketchIcon /></button>

        <div className="ml-auto flex items-center">
          {PREVIEW_MODES.map(([name, icon]) => (
            <button
              key={name}
              type="button"
              aria-label={name}
              aria-pressed={preview === name}
              onClick={() => setPreview(name)}
              className={`flex h-[42px] w-[42px] items-center justify-center border ${
                preview === name ? "border-[#5ba7e0] bg-[#f5fafe]" : "border-transparent"
              }`}
            >
              {icon}
            </button>
          ))}
          <div className="mr-[7px] ml-1 h-9 w-px bg-[#c9c9c9]" />
          {DISPLAY_OPTIONS.map(([name, icon]) => (
            <button key={name} type="button" aria-label={name} className="flex w-[41px] justify-center">{icon}</button>
          ))}
          <div className="mx-[2px] h-9 w-px bg-[#c9c9c9]" />
          <button type="button" aria-label="Preview colours" className="mr-[7px] flex items-center gap-1">
            <Icon>
              <path d="M19 3L31 9L34 20L28 31L16 34L6 28L5 15L10 6Z" fill="#69b4f3" stroke="#1d3f94" strokeWidth="2" />
              <path d="M12 8L20 5L27 10L22 18L12 18L8 14Z" fill="#b5dfff" />
            </Icon>
            <Caret />
          </button>
        </div>
      </div>

      <main className="relative min-h-0 flex-1 overflow-hidden bg-[#d4d0c8]">
        <CanvasGrid />
        <div className="absolute bottom-0 left-0 h-[47px] w-3 border-2 border-[#555] border-l-[#999] bg-[#777]">
          <div className="h-4 bg-linear-to-b from-[#ddd] to-[#aaa]" />
        </div>
        <Compass />
      </main>

      <footer className="flex h-[31px] shrink-0 items-center border-t-2 border-[#f8f8f8] bg-[#f0f0f0] pr-14 pl-1">
        <svg viewBox="0 0 26 26" className="size-[26px]" aria-hidden="true">
          <circle cx="13" cy="13" r="12" fill="#1d4fb4" stroke="#16307c" strokeWidth="2" />
          <circle cx="13" cy="13" r="7" fill="#39b7e6" />
          <rect x="10.5" y="4" width="5" height="11" rx="2.5" fill="#8fe0fa" stroke="#0e2a66" strokeWidth="1.5" />
          <circle cx="13" cy="19.5" r="2.5" fill="#8fe0fa" stroke="#0e2a66" strokeWidth="1.5" />
        </svg>
        <p className="ml-[5px] pt-px text-[19px]">Autosave complete (8 seconds ago)</p>
        <span className="ml-auto pt-px text-[#777]">1.0.0007</span>
      </footer>

      <div className="flex h-[65px] shrink-0 border-t border-[#bbb] bg-[#464646] text-white">
        {SYSTEM_BUTTONS.map(([name, icon]) => (
          <button key={name} type="button" aria-label={name} className="flex w-[78px] items-center justify-center">{icon}</button>
        ))}
        <div className="ml-1 flex gap-[2px]">
          {APPS.map(({ name, state, icon }) => (
            <button
              key={name}
              type="button"
              aria-label={name}
              className={`flex w-[79px] flex-col items-center ${state === "active" ? "bg-[#6c6c6c]" : ""}`}
            >
              <span className="flex flex-1 items-center pt-[2px]">{icon}</span>
              {state === "" && <span className="h-1" />}
              {state === "open" && <span className="h-1 w-[66px] bg-[#ff99a2]" />}
              {state === "active" && <span className="h-1 w-full bg-[#ff99a2]" />}
              {state === "split" && (
                <span className="flex h-1 w-[66px]">
                  <span className="flex-1 bg-[#ff99a2]" />
                  <span className="w-[14px] bg-[#c9808a]" />
                </span>
              )}
            </button>
          ))}
        </div>

        <div className="ml-auto flex items-center pt-[2px] text-[20px]">
          <button type="button" className="mr-5 flex items-center text-[21px]">
            <svg viewBox="0 0 32 32" className="mr-4 size-8" aria-hidden="true">
              <defs>
                <linearGradient id="moon" x1="0" y1="0" x2="0" y2="1">
                  <stop offset="0" stopColor="#ffe600" />
                  <stop offset="1" stopColor="#ffa51f" />
                </linearGradient>
              </defs>
              <path d="M20 1Q31 6 30 17Q28 30 16 31Q6 31 1 22Q12 24 18 17Q23 10 20 1Z" fill="url(#moon)" />
            </svg>
            <span className="mr-3">18°C</span>
            <span>Clear</span>
          </button>
          {TRAY.map(([name, shape]) => (
            <button key={name} type="button" aria-label={name} className="flex w-[52px] justify-center">
              <TaskSvg>{shape}</TaskSvg>
            </button>
          ))}
          <button type="button" className="mx-2">ENG</button>
          <button type="button" aria-label="Notifications, 2 new" className="relative mr-6 ml-4">
            <TaskSvg>
              <path d="M4 6H32V30H20L14 35V30H4Z" fill="#fff" stroke="none" />
              <path d="M9 13H27M9 18H27M9 23H19" stroke="#464646" />
            </TaskSvg>
            <span className="absolute top-[18px] left-4 flex size-[26px] items-center justify-center rounded-full border-2 border-[#999] bg-[#464646] text-base font-semibold">2</span>
          </button>
          <div className="mr-[6px] h-[61px] w-px bg-[#888]" />
        </div>
      </div>
    </div>
  );
};

export default App;
